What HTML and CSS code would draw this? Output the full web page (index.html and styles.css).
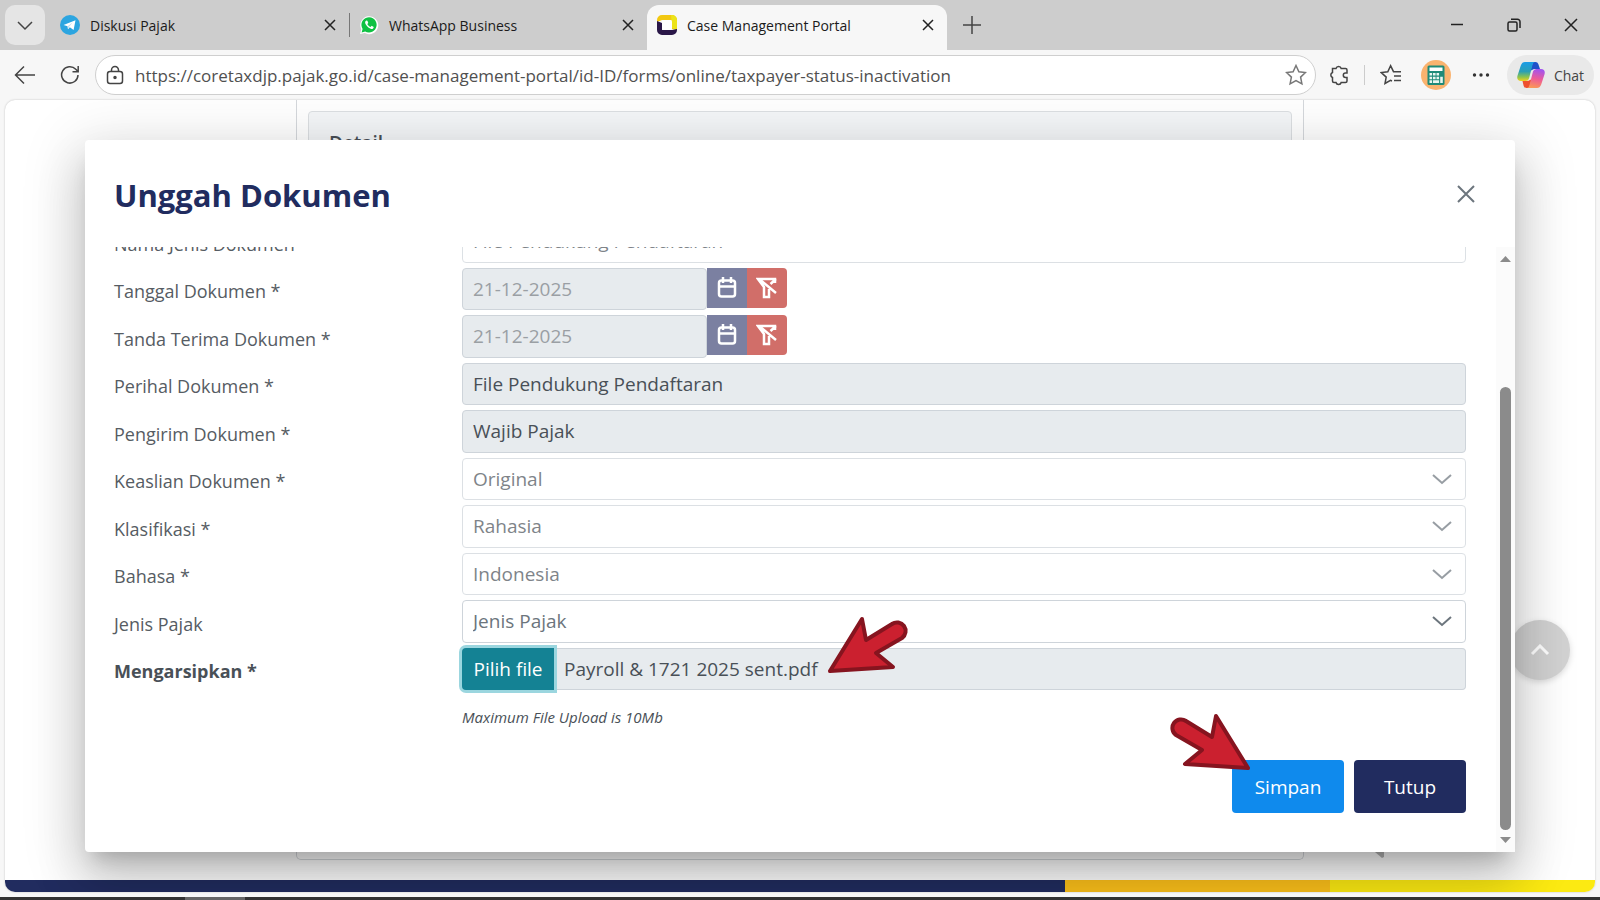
FILE: index.html
```html
<!DOCTYPE html>
<html lang="id">

<head>
  <meta charset="UTF-8">
  <meta name="viewport" content="width=device-width, initial-scale=1.0">
  <title>Case Management Portal</title>
  <link rel="stylesheet" href="styles.css">
</head>

<body>
  <header class="tabstrip">
    <button class="tab-menu" aria-label="Tab actions">
      <svg width="16" height="16" viewBox="0 0 16 16"><path d="M1 5l7 7 7-7" /></svg>
    </button>
    <div class="tab">
      <svg class="favicon" width="20" height="20" viewBox="0 0 20 20">
        <circle cx="10" cy="10" r="10" fill="#2ca5e0" />
        <path d="M3.5 10L15.5 5.2 13.6 15 9.8 12.3 8 14.2 7.6 11.3z" fill="#fff" />
        <path d="M7.6 11.3l5.2-4-3.7 4.4L8 14.2z" fill="#c3dff0" />
      </svg>
      <span class="tab-title">Diskusi Pajak</span>
      <button class="tab-close" aria-label="Close tab"><svg width="12" height="12" viewBox="0 0 12 12"><path d="M1 1l10 10M11 1L1 11" /></svg></button>
    </div>
    <div class="tab tab-divided">
      <svg class="favicon" width="20" height="20" viewBox="0 0 20 20">
        <path d="M1 19l1.3-4.6A9 9 0 1 1 5.800 18z" fill="#fff" />
        <path d="M2.6 17.4l1-3.5A7.6 7.6 0 1 1 6.2 16.4z" fill="#0fc143" />
        <path d="M7.3 5.6c-1.5.7-1.5 2.4-.3 4.2 1.5 2.3 3.2 3.7 5.2 4.1 1.4.2 2.5-.6 2.5-2l-2-1.1-1.2 1.3c-1.5-.6-2.5-1.6-3.2-3l1-1.2-.9-2.200z" fill="#fff" />
      </svg>
      <span class="tab-title">WhatsApp Business</span>
      <button class="tab-close" aria-label="Close tab"><svg width="12" height="12" viewBox="0 0 12 12"><path d="M1 1l10 10M11 1L1 11" /></svg></button>
    </div>
    <div class="tab tab-active">
      <svg class="favicon" width="20" height="20" viewBox="0 0 20 20">
        <path d="M5 0h10a5 5 0 0 1 5 5v10l-5-1V5H5L0 7V5a5 5 0 0 1 5-5z" fill="#f2c811" />
        <path d="M14 0h1a5 5 0 0 1 5 5v10l-5-2z" fill="#ece31a" />
        <path d="M0 6l5 2v7h10l5-1v1a5 5 0 0 1-5 5H5a5 5 0 0 1-5-5z" fill="#2a1748" />
        <rect x="5" y="5" width="10" height="10" rx="2" fill="#fff" />
      </svg>
      <span class="tab-title">Case Management Portal</span>
      <button class="tab-close" aria-label="Close tab"><svg width="12" height="12" viewBox="0 0 12 12"><path d="M1 1l10 10M11 1L1 11" /></svg></button>
    </div>
    <button class="new-tab" aria-label="New tab"><svg width="20" height="20" viewBox="0 0 20 20"><path d="M10 1v18M1 10h18" /></svg></button>
    <div class="window-controls">
      <button aria-label="Minimize"><svg width="14" height="14" viewBox="0 0 14 14"><path d="M1 6.5h12" /></svg></button>
      <button aria-label="Restore"><svg width="14" height="14" viewBox="0 0 14 14"><rect x="1" y="4" width="9" height="9" rx="1.5" /><path d="M4 1.2h6.5a2.5 2.5 0 0 1 2.5 2.5V10" /></svg></button>
      <button aria-label="Close"><svg width="14" height="14" viewBox="0 0 14 14"><path d="M1 1l12 12M13 1L1 13" /></svg></button>
    </div>
  </header>

  <nav class="toolbar">
    <button class="tool" aria-label="Back"><svg width="22" height="20" viewBox="0 0 22 20"><path d="M10 1.5L1.5 10l8.5 8.5M1.5 10H21" /></svg></button>
    <button class="tool" aria-label="Refresh"><svg width="20" height="20" viewBox="0 0 20 20"><path d="M18 10a8.2 8.2 0 1 1-2.2-5.7L18 6.5M18.2 1v5.800h-5.700" /></svg></button>
    <div class="address">
      <svg width="18" height="20" viewBox="0 0 18 20"><rect x="1.5" y="6.5" width="15" height="12" rx="2.5" /><path d="M5.5 6.5V5a3.5 3.5 0 0 1 7 0v1.5" /><circle cx="9" cy="12.5" r="1" fill="#555" /></svg>
      <input class="url" type="text" aria-label="Address" value="https://coretaxdjp.pajak.go.id/case-management-portal/id-ID/forms/online/taxpayer-status-inactivation">
      <button class="star" aria-label="Add to favorites"><svg width="22" height="22" viewBox="0 0 22 22"><path d="M11 1.5l2.9 6.2 6.600.8-4.900 4.600 1.300 6.700L11 16.500l-5.900 3.300 1.300-6.700-4.900-4.600 6.600-.8z" /></svg></button>
    </div>
    <button class="tool" aria-label="Extensions"><svg width="20" height="22" viewBox="0 0 20 22"><path d="M3.5 4.5H7a2.7 2.7 0 0 1 5.2 0h4.3a1.5 1.5 0 0 1 1.5 1.5v3h-1.5a2.2 2.2 0 0 0 0 4.4H18v3.6a1.5 1.5 0 0 1-1.5 1.5h-4.3a2.7 2.7 0 0 1-5.2 0H5A1.5 1.5 0 0 1 3.5 17v-3.5a2.7 2.7 0 0 1 0-5z" /></svg></button>
    <span class="divider"></span>
    <button class="tool" aria-label="Favorites"><svg width="22" height="22" viewBox="0 0 22 22"><path d="M12 17l-1.500-.7-5.500 3.200 1.200-6.400L1.300 8.600l6.500-.9L10.600 1.700l2.900 6h7.500M14 12h7M14 16.500h7" /></svg></button>
    <button class="tool" aria-label="Profile">
      <svg class="filled" width="30" height="30" viewBox="0 0 30 30">
        <circle cx="15" cy="15" r="15" fill="#fab36f" />
        <rect x="6.5" y="5.5" width="17" height="19.5" rx="1.5" fill="#1f8a78" />
        <rect x="8.5" y="7.5" width="13" height="3.5" fill="#fff" />
        <path d="M8.5 13h2.600v2.600H8.500zM12 13h2.600v2.600H12zM15.500 13h2.600v2.600h-2.600zM8.500 16.700h2.600v2.600H8.500zM12 16.700h2.600v2.600H12zM15.500 16.700h2.600v2.600h-2.600zM19.200 16.700h2.600v6.200h-2.600zM8.500 20.300h2.600v2.600H8.500zM12 20.300h6.100v2.600H12z" fill="#e9f5ef" />
      </svg>
    </button>
    <button class="tool" aria-label="More"><svg class="filled" width="18" height="6" viewBox="0 0 18 6"><g fill="#333"><circle cx="2.5" cy="3" r="1.700" /><circle cx="9" cy="3" r="1.700" /><circle cx="15.500" cy="3" r="1.700" /></g></svg></button>
    <button class="chat">
      <svg class="filled" width="28" height="28" viewBox="0 0 28 28">
        <defs>
          <linearGradient id="cool" x1="0" y1="0" x2="0" y2="1">
            <stop offset="0" stop-color="#1a9ce8" /><stop offset=".5" stop-color="#2a9fb5" /><stop offset=".8" stop-color="#8fc44a" /><stop offset="1" stop-color="#f5cf1e" />
          </linearGradient>
          <linearGradient id="warm" x1="0.5" y1="0" x2="0.3" y2="1">
            <stop offset="0" stop-color="#a353ee" /><stop offset=".5" stop-color="#ee5c96" /><stop offset="1" stop-color="#fb9a55" />
          </linearGradient>
        </defs>
        <path d="M16 1h2.500a3 3 0 0 1 2.800 2.100L23 8h-6l-4 2z" fill="#2151c9" />
        <path d="M12 27H9.500a3 3 0 0 1-2.800-2.100L5.500 20H11l4-2z" fill="#ee4f2e" />
        <path d="M8 1h10a3 3 0 0 0-2.300 2.300L12 17.500A3.500 3.500 0 0 1 8.600 20H4c-3 0-4.200-2-3.600-5L3.800 4.500C4.700 2 6 1 8 1z" fill="url(#cool)" />
        <path d="M20 27H10a3 3 0 0 0 2.300-2.300L16 10.500A3.500 3.500 0 0 1 19.400 8H24c3 0 4.200 2 3.600 5l-3.400 10.500C23.300 26 22 27 20 27z" fill="url(#warm)" />
      </svg>
      Chat
    </button>
  </nav>

  <main class="viewport">
    <section class="page-panel">
      <h2 class="page-card">Detail</h2>
    </section>
    <button class="scroll-top" aria-label="Scroll to top"><svg width="20" height="12" viewBox="0 0 20 12"><path d="M2 10l8-8 8 8" /></svg></button>
    <svg class="speech-tail" width="9" height="6" viewBox="0 0 9 6"><path d="M0 0h9v5l-2 1z" fill="#b4b4b4" /></svg>
    <footer class="stripe"><span class="navy"></span><span class="gold"></span><span class="yellow"></span></footer>

    <div class="modal" role="dialog" aria-labelledby="modal-title">
      <div class="modal-header">
        <h1 id="modal-title">Unggah Dokumen</h1>
        <button class="modal-close" aria-label="Tutup dialog"><svg width="18" height="18" viewBox="0 0 18 18"><path d="M1 1l16 16M17 1L1 17" /></svg></button>
      </div>
      <div class="modal-body">
        <form class="modal-content" onsubmit="return false">
          <div class="rows">
            <div class="row">
              <label for="nama">Nama Jenis Dokumen</label>
              <input class="control faded" id="nama" type="text" value="File Pendukung Pendaftaran" readonly>
            </div>
            <div class="row">
              <label for="tanggal">Tanggal Dokumen *</label>
              <div class="date">
                <input class="control disabled muted" id="tanggal" type="text" value="21-12-2025" readonly>
                <button class="pick" type="button" aria-label="Pilih tanggal"><svg width="20" height="22" viewBox="0 0 20 22"><rect x="2" y="3.5" width="16" height="16" rx="2.5" /><path d="M2 9.5h16M6 0v6M14 0v6" /></svg></button>
                <button class="clear" type="button" aria-label="Hapus tanggal"><svg width="22" height="22" viewBox="0 0 22 22"><path d="M19 6V2H2l6 8v10h5v-8M3 2l17 14M14.500 7L20 2" /></svg></button>
              </div>
            </div>
            <div class="row">
              <label for="terima">Tanda Terima Dokumen *</label>
              <div class="date">
                <input class="control disabled muted" id="terima" type="text" value="21-12-2025" readonly>
                <button class="pick" type="button" aria-label="Pilih tanggal"><svg width="20" height="22" viewBox="0 0 20 22"><rect x="2" y="3.5" width="16" height="16" rx="2.5" /><path d="M2 9.5h16M6 0v6M14 0v6" /></svg></button>
                <button class="clear" type="button" aria-label="Hapus tanggal"><svg width="22" height="22" viewBox="0 0 22 22"><path d="M19 6V2H2l6 8v10h5v-8M3 2l17 14M14.500 7L20 2" /></svg></button>
              </div>
            </div>
            <div class="row">
              <label for="perihal">Perihal Dokumen *</label>
              <input class="control disabled" id="perihal" type="text" value="File Pendukung Pendaftaran" readonly>
            </div>
            <div class="row">
              <label for="pengirim">Pengirim Dokumen *</label>
              <input class="control disabled" id="pengirim" type="text" value="Wajib Pajak" readonly>
            </div>
            <div class="row">
              <label for="keaslian">Keaslian Dokumen *</label>
              <div class="select faded">
                <select class="control" id="keaslian"><option>Original</option></select>
                <svg width="20" height="12" viewBox="0 0 20 12"><path d="M1 2l9 8 9-8" /></svg>
              </div>
            </div>
            <div class="row">
              <label for="klasifikasi">Klasifikasi *</label>
              <div class="select faded">
                <select class="control" id="klasifikasi"><option>Rahasia</option></select>
                <svg width="20" height="12" viewBox="0 0 20 12"><path d="M1 2l9 8 9-8" /></svg>
              </div>
            </div>
            <div class="row">
              <label for="bahasa">Bahasa *</label>
              <div class="select faded">
                <select class="control" id="bahasa"><option>Indonesia</option></select>
                <svg width="20" height="12" viewBox="0 0 20 12"><path d="M1 2l9 8 9-8" /></svg>
              </div>
            </div>
            <div class="row">
              <label for="jenis">Jenis Pajak</label>
              <div class="select placeholder">
                <select class="control" id="jenis"><option>Jenis Pajak</option></select>
                <svg width="20" height="12" viewBox="0 0 20 12"><path d="M1 2l9 8 9-8" /></svg>
              </div>
            </div>
            <div class="row">
              <label class="strong" for="arsip">Mengarsipkan *</label>
              <div class="file">
                <button class="choose" type="button">Pilih file</button>
                <input class="control disabled" id="arsip" type="text" value="Payroll &amp; 1721 2025 sent.pdf" readonly>
                <svg class="pointer pointer-file" width="84" height="62" viewBox="0 0 84 62"><path d="M3 56L35 4l4 21 26-16a8.500 8.500 0 0 1 10 14L49 38l17 14z" /></svg>
              </div>
            </div>
          </div>
          <p class="note">Maximum File Upload is 10Mb</p>
          <div class="actions">
            <div class="save">
              <button class="btn btn-primary" type="submit">Simpan</button>
              <svg class="pointer pointer-save" width="84" height="62" viewBox="0 0 84 62"><path d="M81 56L49 4l-4 21-26-16a8.500 8.500 0 0 0-10 14L35 38 18 52z" /></svg>
            </div>
            <button class="btn btn-dark" type="button">Tutup</button>
          </div>
        </form>
        <div class="scrollbar">
          <svg width="11" height="6" viewBox="0 0 11 6"><path d="M0 6l5.500-6L11 6z" /></svg>
          <div class="scroll-track"><div class="scroll-thumb"></div></div>
          <svg width="11" height="6" viewBox="0 0 11 6"><path d="M0 0l5.500 6L11 0z" /></svg>
        </div>
      </div>
    </div>
  </main>
  <div class="taskbar"><span></span></div>
</body>

</html>
```

FILE: styles.css
```css
* {
  box-sizing: border-box;
}

body {
  margin: 0;
  height: 100vh;
  display: flex;
  flex-direction: column;
  overflow: hidden;
  background: #f7f7f7;
  color: #495057;
  font-family: "Open Sans", "Noto Sans", sans-serif;
  font-size: 19px;
}

button,
input,
select {
  font: inherit;
  color: inherit;
}

button {
  display: flex;
  align-items: center;
  justify-content: center;
  padding: 0;
  border: none;
  background: none;
}

svg {
  display: block;
  flex: none;
  fill: none;
  stroke: #444;
  stroke-width: 1.5;
}

.favicon,
.filled {
  stroke: none;
}

/* browser tabs */
.tabstrip {
  display: flex;
  align-items: center;
  height: 50px;
  padding-left: 5px;
  background: #cdcdcd;
  color: #1b1b1b;
  font-size: 14px;
}

.tab-menu {
  width: 40px;
  height: 40px;
  border-radius: 10px;
  background: #e5e5e5;
}

.tab {
  display: flex;
  align-items: center;
  gap: 10px;
  width: 298px;
  height: 45px;
  padding: 0 12px 5px 10px;
  margin-top: 5px;
}

.tab:first-of-type {
  width: 304px;
  padding-left: 15px;
}

.tab-divided {
  background: linear-gradient(#777, #777) 0 8px / 1px 24px no-repeat;
}

.tab-active {
  width: 300px;
  border-radius: 12px 12px 0 0;
  background: #f7f7f7;
}

.tab-title {
  flex: 1;
  white-space: nowrap;
}

.tab-close {
  width: 14px;
  height: 14px;
}

.tab-close svg {
  stroke: #222;
}

.new-tab {
  width: 50px;
  height: 40px;
}

.window-controls {
  display: flex;
  margin-left: auto;
  padding-right: 1px;
}

.window-controls button {
  width: 57px;
  height: 50px;
}

.window-controls svg {
  stroke: #222;
}

/* address row */
.toolbar {
  display: flex;
  align-items: center;
  height: 50px;
  padding: 0 6px 0 2px;
}

.tool {
  width: 45px;
  height: 40px;
}

.address {
  display: flex;
  flex: 1;
  align-items: center;
  gap: 11px;
  height: 40px;
  padding: 0 8px 0 10px;
  margin-left: 3px;
  border: 1px solid #cfcfcf;
  border-radius: 20px;
  background: #fff;
}

.url {
  flex: 1;
  min-width: 0;
  padding: 0;
  border: none;
  outline: none;
  background: none;
  color: #505050;
  font-size: 17px;
}

.star svg {
  stroke: #777;
}

.divider {
  width: 1px;
  height: 20px;
  margin: 0 3px;
  background: #ccc;
}

.chat {
  gap: 9px;
  width: 87px;
  height: 40px;
  margin-left: 4px;
  border-radius: 20px;
  background: #e9e9e9;
  color: #444;
  font-size: 14px;
}

/* page behind the dialog */
.viewport {
  position: relative;
  flex: 1;
  display: flex;
  flex-direction: column;
  margin: 0 5px 5px;
  border-radius: 10px;
  overflow: hidden;
  background: #fff;
  box-shadow: 0 0 2px #bbb;
}

.page-panel {
  flex: 1;
  margin: 0 291px 20px;
  padding: 11px 11px 0;
  border: 1px solid #d5d8dc;
  border-top: none;
  border-radius: 0 0 5px 5px;
}

.page-card {
  height: 60px;
  margin: 0;
  padding: 18px 20px;
  border: 1px solid #dcdfe2;
  border-radius: 4px;
  background: #f4f6f8;
  font-size: 19px;
  font-weight: 600;
}

.scroll-top {
  position: absolute;
  right: 25px;
  bottom: 212px;
  width: 60px;
  height: 60px;
  border-radius: 50%;
  background: #d2d2d2;
  box-shadow: 0 2px 6px rgba(0, 0, 0, 0.15);
}

.scroll-top svg {
  stroke: #fff;
  stroke-width: 3;
}

.speech-tail {
  position: absolute;
  right: 211px;
  bottom: 34px;
  stroke: none;
}

.stripe {
  display: flex;
  height: 12px;
}

.navy {
  flex: 4;
  background: #212c5f;
}

.gold {
  flex: 1;
  background: #fdc11a;
}

.yellow {
  flex: 1;
  background: #fcea12;
}

/* dialog */
.modal {
  position: absolute;
  inset: 40px 80px;
  display: flex;
  flex-direction: column;
  border-radius: 4px;
  background: #fff;
  box-shadow:
    0 14px 19px -9px rgba(0, 0, 0, 0.2),
    0 30px 48px 4px rgba(0, 0, 0, 0.14),
    0 11px 58px 10px rgba(0, 0, 0, 0.12);
}

.modal-header {
  display: flex;
  align-items: center;
  justify-content: space-between;
  height: 107px;
  padding: 0 40px 0 29px;
}

h1 {
  margin: 0;
  padding-top: 3px;
  color: #212c5f;
  font-size: 31px;
  font-weight: 700;
}

.modal-close svg {
  stroke: #6c757d;
  stroke-width: 2;
}

.modal-body {
  flex: 1;
  display: flex;
  min-height: 0;
  overflow: hidden;
}

.modal-content {
  flex: 1;
  display: flex;
  flex-direction: column;
  padding: 0 30px 39px 29px;
  margin-top: -27px;
}

.rows {
  flex: 1;
  display: grid;
  grid-auto-rows: 1fr;
}

.row {
  display: grid;
  grid-template-columns: 348px 1fr;
  padding-bottom: 5px;
}

.row label {
  align-self: center;
  padding-top: 5px;
  color: #565c63;
  font-size: 18px;
}

.row .strong {
  color: #495057;
  font-weight: 700;
}

.control {
  width: 100%;
  min-width: 0;
  padding: 0 10px;
  border: 1px solid #ced4da;
  border-radius: 4px;
  outline: none;
  background: #fff;
}

.disabled {
  background: #e7ebee;
}

.muted {
  color: #9a9fa4;
}

.faded {
  opacity: 0.7;
}

.select {
  display: grid;
  align-items: center;
}

.select > * {
  grid-area: 1 / 1;
}

.select .control {
  height: 100%;
  appearance: none;
}

.placeholder .control {
  color: #6c757d;
}

.select svg {
  justify-self: end;
  margin-right: 14px;
  pointer-events: none;
  stroke: #6c757d;
  stroke-width: 2;
}

.date {
  display: flex;
  align-items: flex-start;
}

.date .control {
  width: 245px;
  height: 100%;
}

.date button {
  width: 40px;
  height: 40px;
  background: #7b80a1;
}

.date .clear {
  border-radius: 0 4px 4px 0;
  background: #d16e69;
}

.date svg {
  stroke: #fff;
  stroke-width: 2.5;
}

.file {
  position: relative;
  display: flex;
}

.choose {
  flex: none;
  z-index: 1;
  width: 92px;
  border-radius: 4px 0 0 4px;
  background: #148294;
  color: #fff;
  font-size: 19px;
  box-shadow: 0 0 0 3px #9bd6df;
}

.file .control {
  border-left: none;
  border-radius: 0 4px 4px 0;
}

.note {
  margin: 0;
  padding-left: 348px;
  height: 65px;
  line-height: 44px;
  font-size: 15px;
  font-style: italic;
}

.actions {
  display: flex;
  justify-content: flex-end;
  gap: 10px;
}

.save {
  position: relative;
}

.btn {
  width: 112px;
  height: 53px;
  border-radius: 4px;
  color: #fff;
}

.btn-primary {
  background: #0f8aed;
}

.btn-dark {
  background: #212c5f;
}

.pointer {
  position: absolute;
  fill: #cb202f;
  stroke: #86141f;
  stroke-width: 4;
  stroke-linejoin: round;
}

.pointer-file {
  left: 365px;
  top: -33px;
}

.pointer-save {
  left: -65px;
  top: -48px;
}

.scrollbar {
  display: flex;
  flex-direction: column;
  align-items: center;
  width: 19px;
  padding: 9px 0;
  background: #fbfbfb;
}

.scrollbar svg {
  fill: #8b8b8b;
  stroke: none;
}

.scroll-track {
  flex: 1;
  display: flex;
  flex-direction: column;
  justify-content: flex-end;
  padding: 7px 0;
}

.scroll-thumb {
  width: 11px;
  height: 79%;
  border-radius: 6px;
  background: #8b8b8b;
}

.taskbar {
  height: 3px;
  padding-left: 185px;
  background: #333;
}

.taskbar span {
  display: block;
  width: 60px;
  height: 3px;
  background: #666;
}
```
